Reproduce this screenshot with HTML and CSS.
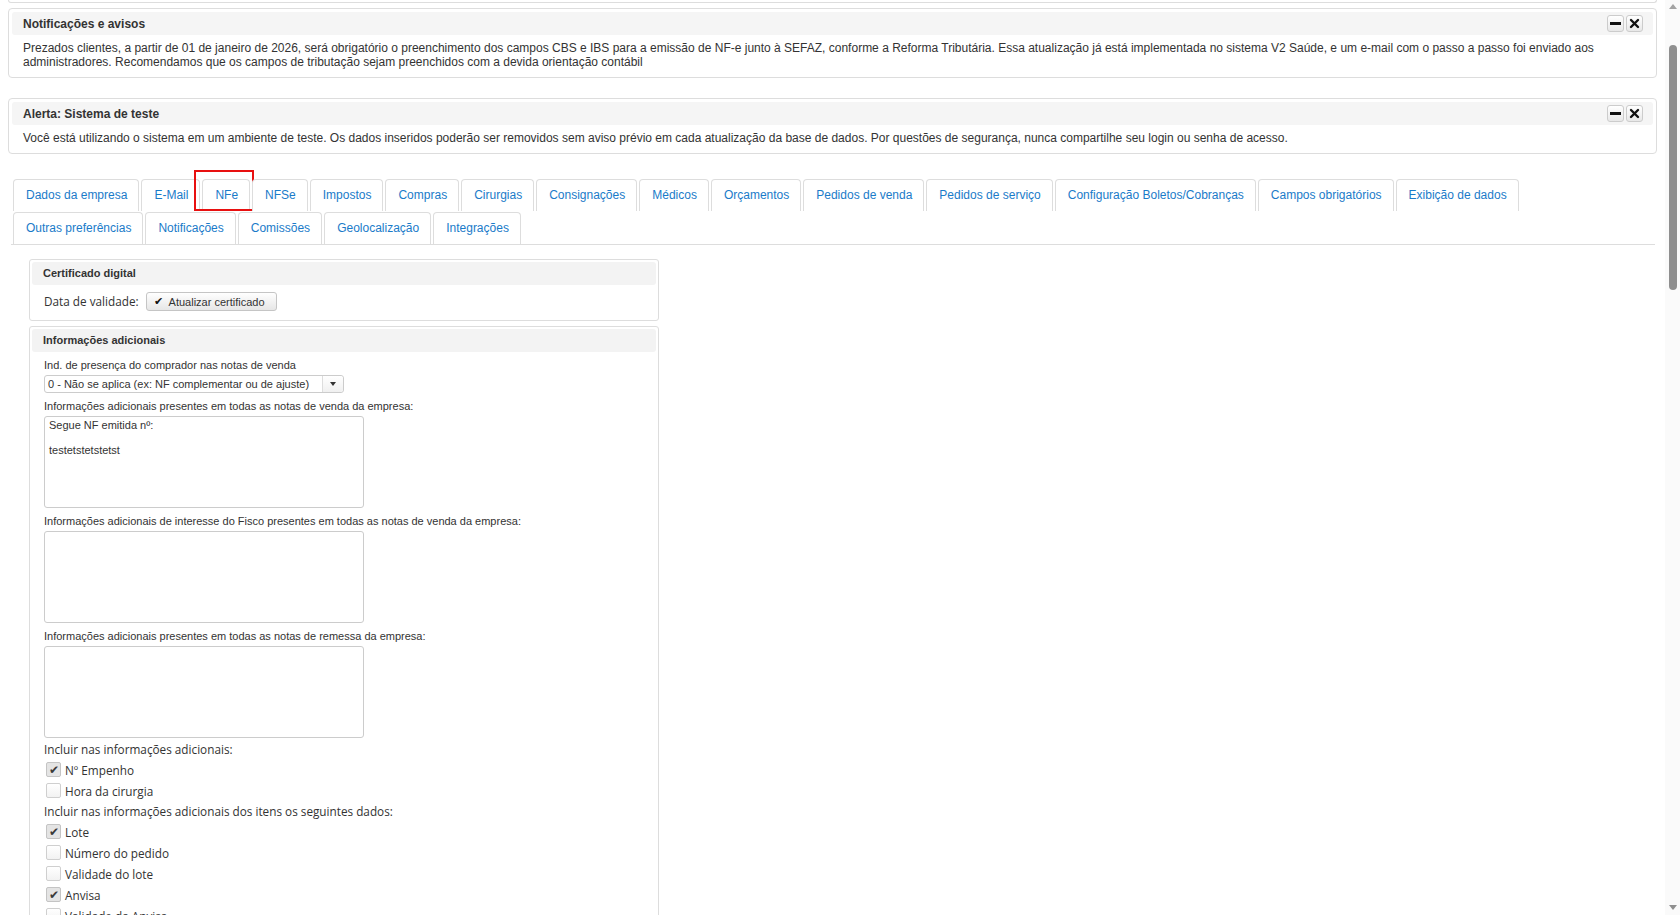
FILE: index.html
```html
<!DOCTYPE html>
<html>
<head>
<meta charset="UTF-8">
<title>Configurações da empresa</title>
<link rel="stylesheet" href="styles.css">
</head>
<body>
<div class="screen">
    <div class="page">
        <div class="panel-tail"></div>

        <div class="panel notice">
            <div class="panel-head">
                <span>Notificações e avisos</span>
                <div class="head-tools">
                    <span class="tool"><svg width="11" height="11" viewBox="0 0 11 11"><rect x="0" y="4" width="11" height="3" fill="#111"/></svg></span>
                    <span class="tool"><svg width="11" height="11" viewBox="0 0 11 11"><path d="M2 2 L9 9 M9 2 L2 9" stroke="#111" stroke-width="2.4" stroke-linecap="round"/></svg></span>
                </div>
            </div>
            <div class="panel-text">
                Prezados clientes, a partir de 01 de janeiro de 2026, será obrigatório o preenchimento dos campos CBS e IBS para a emissão de NF-e junto à SEFAZ, conforme a Reforma Tributária. Essa atualização já está implementada no sistema V2 Saúde, e um e-mail com o passo a passo foi enviado aos administradores. Recomendamos que os campos de tributação sejam preenchidos com a devida orientação contábil
            </div>
        </div>

        <div class="panel notice">
            <div class="panel-head">
                <span>Alerta: Sistema de teste</span>
                <div class="head-tools">
                    <span class="tool"><svg width="11" height="11" viewBox="0 0 11 11"><rect x="0" y="4" width="11" height="3" fill="#111"/></svg></span>
                    <span class="tool"><svg width="11" height="11" viewBox="0 0 11 11"><path d="M2 2 L9 9 M9 2 L2 9" stroke="#111" stroke-width="2.4" stroke-linecap="round"/></svg></span>
                </div>
            </div>
            <div class="panel-text">
                Você está utilizando o sistema em um ambiente de teste. Os dados inseridos poderão ser removidos sem aviso prévio em cada atualização da base de dados. Por questões de segurança, nunca compartilhe seu login ou senha de acesso.
            </div>
        </div>

        <div class="tabs">
            <div class="tab-row">
                <a class="tab">Dados da empresa</a>
                <a class="tab">E-Mail</a>
                <a class="tab active">NFe<span class="mark"></span></a>
                <a class="tab">NFSe</a>
                <a class="tab">Impostos</a>
                <a class="tab">Compras</a>
                <a class="tab">Cirurgias</a>
                <a class="tab">Consignações</a>
                <a class="tab">Médicos</a>
                <a class="tab">Orçamentos</a>
                <a class="tab">Pedidos de venda</a>
                <a class="tab">Pedidos de serviço</a>
                <a class="tab">Configuração Boletos/Cobranças</a>
                <a class="tab">Campos obrigatórios</a>
                <a class="tab">Exibição de dados</a>
            </div>
            <div class="tab-row">
                <a class="tab">Outras preferências</a>
                <a class="tab">Notificações</a>
                <a class="tab">Comissões</a>
                <a class="tab">Geolocalização</a>
                <a class="tab">Integrações</a>
            </div>
        </div>

        <div class="tab-body">
            <div class="box">
                <div class="box-head">Certificado digital</div>
                <div class="cert-row">
                    <span class="opt-text">Data de validade:</span>
                    <button class="btn"><span class="btn-check">&#10004;</span>Atualizar certificado</button>
                </div>
            </div>

            <div class="box">
                <div class="box-head">Informações adicionais</div>
                <div class="box-body">
                    <div class="lbl first">Ind. de presença do comprador nas notas de venda</div>
                    <div class="select">
                        <span class="select-val">0 - Não se aplica (ex: NF complementar ou de ajuste)</span>
                        <span class="select-arrow"><span class="caret"></span></span>
                    </div>

                    <div class="lbl">Informações adicionais presentes em todas as notas de venda da empresa:</div>
                    <textarea class="area" readonly>Segue NF emitida nº:

testetstetstetst</textarea>

                    <div class="lbl">Informações adicionais de interesse do Fisco presentes em todas as notas de venda da empresa:</div>
                    <textarea class="area" readonly></textarea>

                    <div class="lbl">Informações adicionais presentes em todas as notas de remessa da empresa:</div>
                    <textarea class="area" readonly></textarea>

                    <div class="opts">
                        <div class="opt-text">Incluir nas informações adicionais:</div>
                        <div class="opt"><span class="chk on">&#10004;</span>Nº Empenho</div>
                        <div class="opt"><span class="chk"></span>Hora da cirurgia</div>
                        <div class="opt-text">Incluir nas informações adicionais dos itens os seguintes dados:</div>
                        <div class="opt"><span class="chk on">&#10004;</span>Lote</div>
                        <div class="opt"><span class="chk"></span>Número do pedido</div>
                        <div class="opt"><span class="chk"></span>Validade do lote</div>
                        <div class="opt"><span class="chk on">&#10004;</span>Anvisa</div>
                        <div class="opt"><span class="chk"></span>Validade da Anvisa</div>
                    </div>
                </div>
            </div>
        </div>
    </div>

    <div class="scrollbar">
        <div class="arrow-up"></div>
        <div class="thumb"></div>
        <div class="track-rest"></div>
        <div class="arrow-down"></div>
    </div>
</div>
</body>
</html>
```

FILE: styles.css
```css
* {
    margin: 0;
    padding: 0;
    box-sizing: border-box;
}

body {
    font-family: "Liberation Sans", Arial, sans-serif;
    font-size: 12px;
    color: #333;
    background: #fff;
}

.screen {
    display: flex;
    height: 915px;
    overflow: hidden;
}

.page {
    flex: 1;
    padding: 0 8px;
    overflow: hidden;
}

.panel-tail {
    height: 3px;
    border: 1px solid #ddd;
    border-top: none;
    border-radius: 0 0 4px 4px;
}

/* notice panels */
.panel {
    border: 1px solid #ddd;
    border-radius: 4px;
    padding: 3px;
    margin-top: 5px;
}

.panel + .panel {
    margin-top: 20px;
}

.panel-head {
    display: flex;
    justify-content: space-between;
    align-items: center;
    height: 23px;
    padding: 0 10px 0 11px;
    background: #f5f5f5;
    border-radius: 3px;
    font-weight: bold;
}

.head-tools {
    display: flex;
    gap: 2px;
}

.tool {
    width: 17px;
    height: 17px;
    display: flex;
    align-items: center;
    justify-content: center;
    border: 1px solid #ccc;
    border-radius: 3px;
    background: linear-gradient(#ffffff, #e8e8e8);
}

.panel-text {
    padding: 6px 11px 5px 11px;
    line-height: 14px;
}

/* tabs */
.tabs {
    margin: 25px 2px 0 3px;
    padding-left: 2px;
    border-bottom: 1px solid #ddd;
}

.tab-row {
    display: flex;
    gap: 2px;
}

.tab-row + .tab-row {
    margin-top: 1px;
}

.tab {
    position: relative;
    height: 32px;
    line-height: 31px;
    padding: 0 11px 0 12px;
    border: 1px solid #ddd;
    border-bottom: none;
    border-radius: 4px 4px 0 0;
    color: #1a7bc9;
    background: #fff;
    white-space: nowrap;
}

.tab .mark {
    position: absolute;
    top: -10px;
    left: -9px;
    width: 60px;
    height: 41px;
    border: 2px solid #e81010;
}

/* form */
.tab-body {
    margin: 14px 0 0 21px;
    width: 630px;
}

.box {
    border: 1px solid #ddd;
    border-radius: 3px;
    padding: 2px;
    font-size: 11px;
}

.box + .box {
    margin-top: 5px;
}

.box-head {
    height: 23px;
    line-height: 23px;
    padding-left: 11px;
    background: #f3f3f3;
    border-radius: 3px;
    font-weight: bold;
}

.cert-row {
    display: flex;
    align-items: center;
    height: 33px;
    padding: 0 12px;
}

.btn {
    display: flex;
    align-items: center;
    height: 19px;
    margin-left: 7px;
    padding: 0 11px 0 7px;
    border: 1px solid #c5c5c5;
    border-radius: 3px;
    background: linear-gradient(#ffffff, #e6e6e6);
    font-family: "Liberation Sans", Arial, sans-serif;
    font-size: 11px;
    color: #333;
}

.btn-check {
    font-size: 11px;
    color: #111;
    margin-right: 6px;
}

.box-body {
    padding: 6px 12px 0 12px;
}

.lbl {
    line-height: 14px;
    margin-top: 6px;
}

.lbl.first {
    margin-top: 0;
}

.select {
    display: flex;
    width: 300px;
    height: 18px;
    margin-top: 3px;
    border: 1px solid #ccc;
    border-radius: 3px;
}

.select-val {
    flex: 1;
    line-height: 16px;
    padding-left: 3px;
}

.select-arrow {
    width: 21px;
    display: flex;
    align-items: center;
    justify-content: center;
    border-left: 1px solid #ddd;
    background: linear-gradient(#ffffff, #f0f0f0);
    border-radius: 0 3px 3px 0;
}

.caret {
    border-left: 3px solid transparent;
    border-right: 3px solid transparent;
    border-top: 4px solid #333;
}

.area {
    display: block;
    width: 320px;
    height: 92px;
    margin-top: 3px;
    padding: 2px 4px;
    border: 1px solid #ccc;
    border-radius: 3px;
    font-family: "Liberation Sans", Arial, sans-serif;
    font-size: 11px;
    line-height: 12.5px;
    color: #333;
    resize: none;
    outline: none;
}

.opts {
    margin-top: 1px;
    font-family: "Open Sans", sans-serif;
    font-size: 11.75px;
    color: #333;
}

.opt-text {
    font-family: "Open Sans", sans-serif;
    font-size: 11.75px;
    line-height: 21px;
}

.opts .opt-text + .opt {
    margin-top: -1px;
}

.opt {
    display: flex;
    align-items: center;
    height: 21px;
}

.chk {
    width: 15px;
    height: 15px;
    margin: 0 4px 0 2px;
    border: 1px solid #cfcfcf;
    border-radius: 2px;
    background: linear-gradient(#ffffff, #f2f2f2);
    display: flex;
    align-items: center;
    justify-content: center;
    font-size: 12px;
    color: #3a3a3a;
}

.chk.on {
    background: #e4e4e4;
    border-color: #c4c4c4;
}

/* page scrollbar */
.scrollbar {
    width: 15px;
    display: flex;
    flex-direction: column;
    align-items: center;
    background: #fafafa;
}

.arrow-up {
    margin-top: 4px;
    border-left: 4px solid transparent;
    border-right: 4px solid transparent;
    border-bottom: 5px solid #a3a3a3;
}

.thumb {
    width: 8px;
    height: 245px;
    margin-top: 36px;
    border-radius: 4px;
    background: #8f8f8f;
}

.track-rest {
    flex: 1;
}

.arrow-down {
    margin-bottom: 5px;
    border-left: 4px solid transparent;
    border-right: 4px solid transparent;
    border-top: 5px solid #8f8f8f;
}
```
